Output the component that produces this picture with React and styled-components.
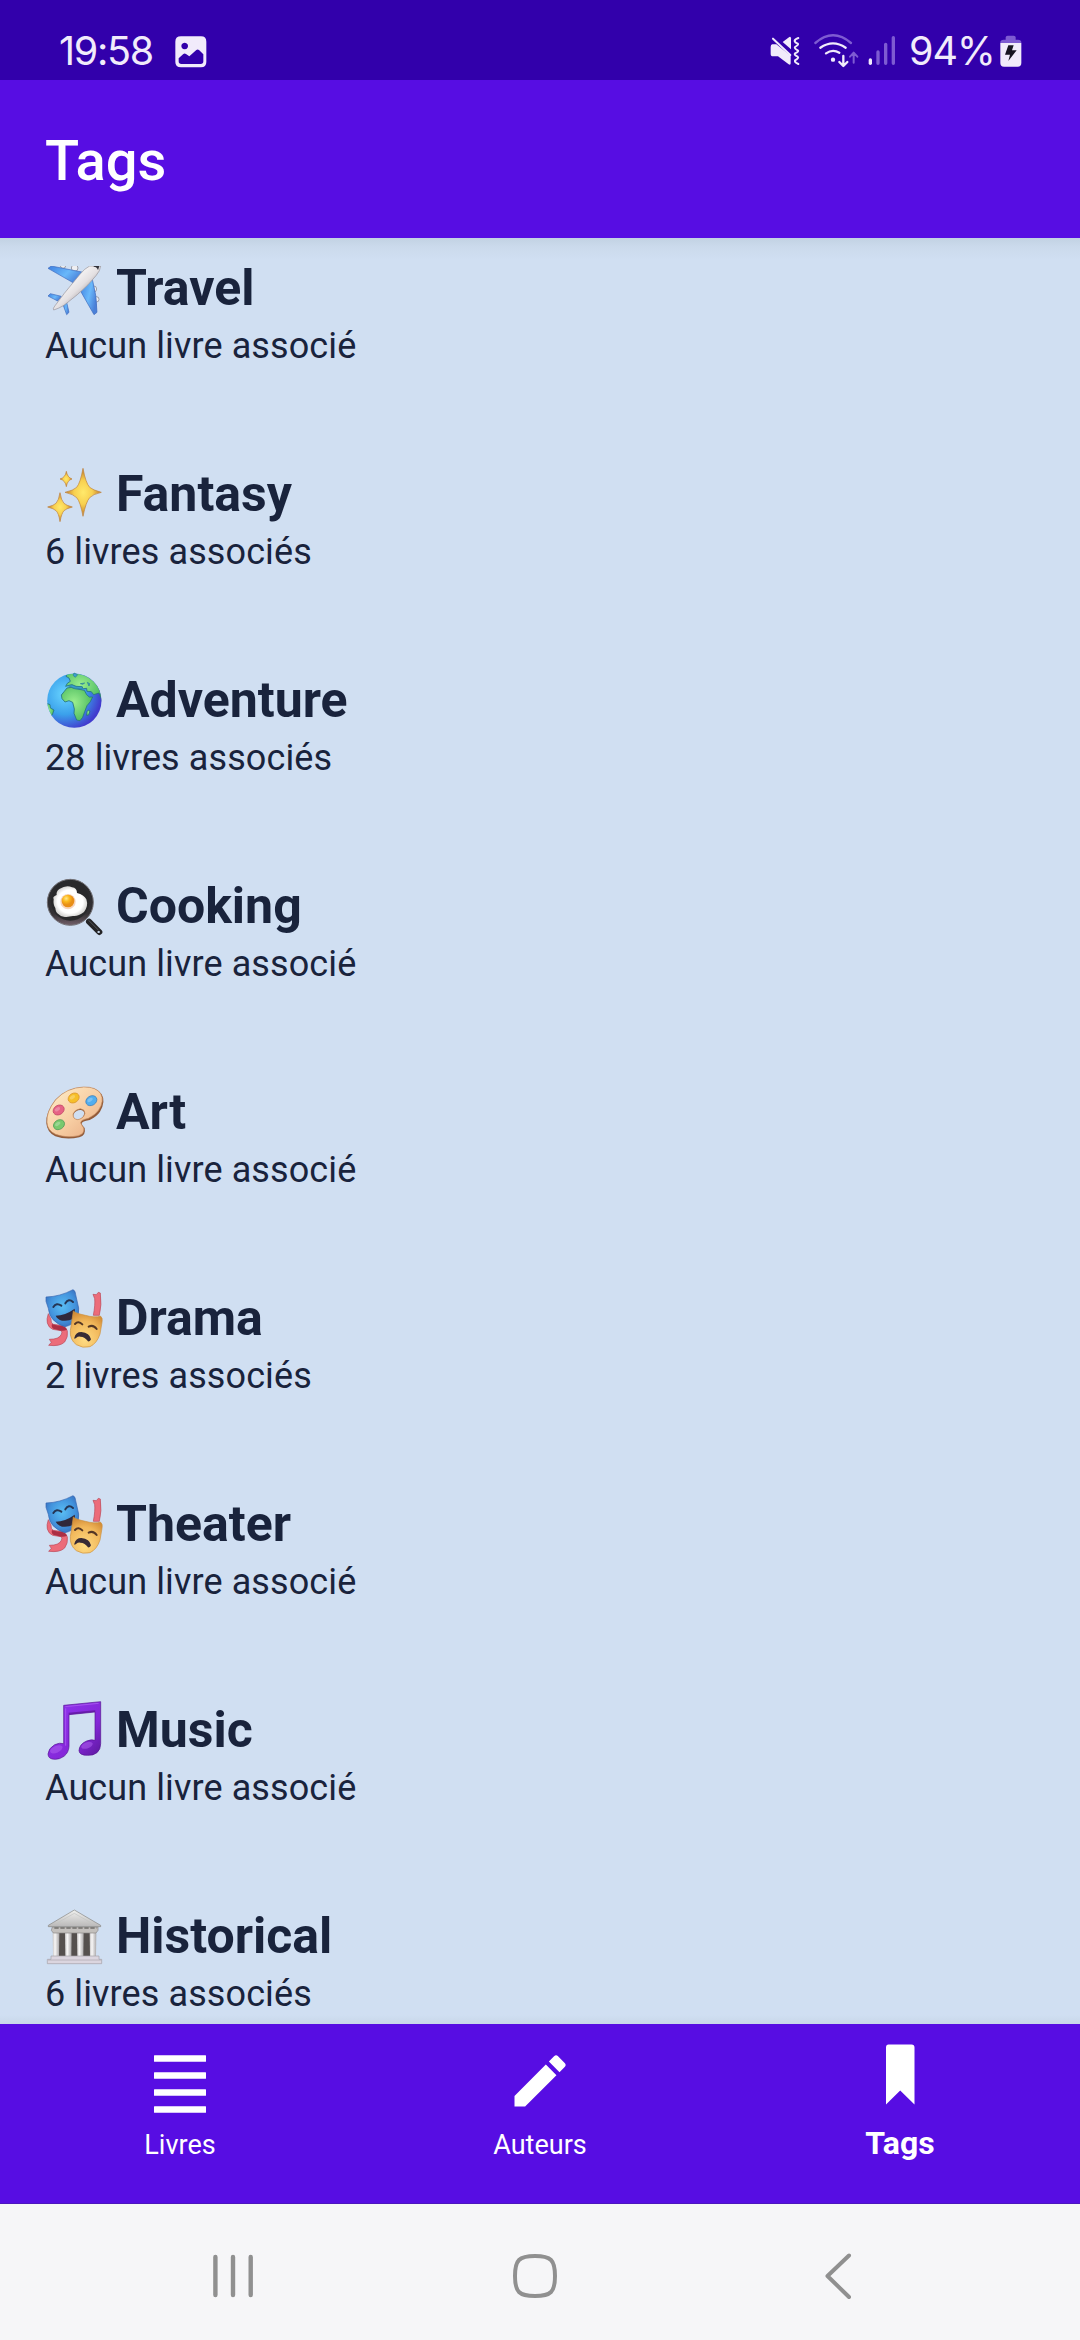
import React from "react";
import styled, { createGlobalStyle } from "styled-components";

const GlobalStyle = createGlobalStyle`
  * { box-sizing: border-box; }
  body { margin: 0; background: #f6f6f8; font-family: Roboto, "Noto Sans", sans-serif; }
  ul { list-style: none; margin: 0; padding: 0; }
  h1, h2, p { margin: 0; }
`;

const Screen = styled.div`
  width: 1080px;
  height: 2340px;
  display: flex;
  flex-direction: column;
  overflow: hidden;
`;

const StatusBar = styled.header`
  height: 80px;
  flex: none;
  display: flex;
  justify-content: space-between;
  padding: 0 58px 0 59px;
  background: #3200ab;
  color: #f1ebfb;
`;

const StatusGroup = styled.div`
  display: flex;
  align-items: flex-start;
  svg { display: block; flex: none; }
`;

const StatusText = styled.span`
  font-family: Inter, Roboto, sans-serif;
  font-size: 39.5px;
  line-height: 48px;
  padding-top: 27px;
  width: ${(p) => p.$width}px;
  padding-left: ${(p) => p.$indent || 0}px;
  letter-spacing: ${(p) => p.$spacing || 0}px;
  white-space: nowrap;
`;

const ImageSlot = styled.div`
  padding-top: 36px;
`;

const AppBar = styled.div`
  height: 158px;
  flex: none;
  display: flex;
  align-items: center;
  padding: 4px 45px 0;
  background: #570de3;
`;

const AppTitle = styled.h1`
  color: #fff;
  font-size: 56px;
  line-height: 66px;
  font-weight: 500;
`;

const Content = styled.main`
  flex: 1;
  min-height: 0;
  overflow: hidden;
  padding: 22px 45px 0;
  background:
    linear-gradient(to bottom, #c2d2e3 0, #cbdaec 9px, rgba(208, 223, 242, 0) 22px),
    linear-gradient(to top, #c8d7e9 0, rgba(208, 223, 242, 0) 9px),
    #d0dff2;
`;

const TagRow = styled.li`
  height: 206px;
`;

const TagHeading = styled.h2`
  display: flex;
  height: 60px;
  gap: 11px;
  color: #19233c;
  font-size: 50px;
  line-height: 56px;
  font-weight: 700;
  svg { display: block; flex: none; overflow: visible; }
`;

const TagCount = styled.p`
  padding-top: 4px;
  color: #19233c;
  font-size: 36px;
  line-height: 44px;
  letter-spacing: 0.1px;
`;

const BottomBar = styled.nav`
  height: 180px;
  flex: none;
  display: grid;
  grid-template-columns: repeat(3, 1fr);
  background: #570de3;
  border-bottom: 1px solid #4c16bd;
`;

const Tab = styled.div`
  display: flex;
  flex-direction: column;
  align-items: center;
  padding-top: 17px;
  color: #fff;
  svg { display: block; flex: none; }
`;

const TabLabel = styled.span`
  display: block;
  line-height: 40px;
  margin-top: ${(p) => (p.$active ? 2 : 4)}px;
  font-size: ${(p) => (p.$active ? 32 : 27)}px;
  font-weight: ${(p) => (p.$active ? 700 : 400)};
`;

const SystemNav = styled.footer`
  height: 136px;
  flex: none;
  display: grid;
  grid-template-columns: 302px 305px 36px;
  align-items: start;
  padding: 46px 0 0 207px;
  background: #f6f6f8;
  svg { display: block; }
`;

function ImageIcon() {
  return (
    <svg width="32" height="32" viewBox="0 0 96 96">
      <path
        fill="currentColor"
        fillRule="evenodd"
        d="M18 1H78Q94 1 94 17V78Q94 94 78 94H18Q1 94 1 78V17Q1 1 18 1ZM29 20a10 10 0 1 0 .1 0ZM11 67V76Q11 84 19 84H77Q85 84 85 76V55L72 42Q68 39 64 42L43 61L33 54Q29 51 25 54Z"
      />
    </svg>
  );
}

function StatusIcons() {
  return (
    <svg width="135" height="80" viewBox="80 0 405 240">
      <g fill="#f1ebfb">
        <path d="M96 133H108L151 167V190Q151 196 145 193L113 169H98Q91 169 91 161V141Q91 133 96 133Z" />
        <path d="M127 126L147 111Q152 109 152 115V148Z" />
      </g>
      <g fill="none" stroke="#f1ebfb" strokeLinecap="round" strokeLinejoin="round">
        <path strokeWidth="6" d="M98 116L150 165" />
        <path strokeWidth="6" d="M174 114Q162 118 163 124Q164 128 172 131Q176 134 164 141Q161 145 172 151Q177 154 164 160Q160 164 172 170Q177 174 164 181Q162 187 174 192" />
        <path strokeWidth="7" d="M240 143Q278 117 316 143M257 160Q277 146 297 158" />
      </g>
      <path d="M225 129Q278 83 332 129" fill="none" stroke="#7e5bd2" strokeWidth="7" strokeLinecap="round" />
      <circle cx="278" cy="179" r="6.5" fill="#f1ebfb" />
      <path d="M309 168V197M297 186L309 198L321 186" fill="none" stroke="#f1ebfb" strokeWidth="7" strokeLinecap="round" strokeLinejoin="round" />
      <path d="M340 188V159M329 170L340 158L351 170" fill="none" stroke="#7e5bd2" strokeWidth="6" strokeLinecap="round" strokeLinejoin="round" />
      <g strokeLinecap="round" strokeWidth="10">
        <path d="M390 180V190" stroke="#f1ebfb" />
        <path d="M413 156V190M436 133V190M459 113V190" stroke="#7e5bd2" />
      </g>
    </svg>
  );
}

function BatteryIcon() {
  return (
    <svg width="22" height="80" viewBox="779 0 66 240">
      <path d="M780 129V127Q780 119 790 119H796V112Q796 107 802 107H820Q826 107 826 112V119H833Q843 119 843 127V129Z" fill="#7e5bd2" />
      <path d="M780 129H843V189Q843 200 832 200H791Q780 200 780 189Z" fill="#f1ebfb" />
      <path d="M804 136H820L815 151H829L804 183L809 164H794Z" fill="#171421" />
    </svg>
  );
}

function Airplane() {
  return (
    <svg width="60" height="60" viewBox="45 28 180 180">
      <defs>
        <linearGradient id="planeBody" x1="0" y1="0" x2="1" y2="1">
          <stop offset=".25" stopColor="#fff" />
          <stop offset=".52" stopColor="#e4e0e2" />
          <stop offset=".72" stopColor="#9f989c" />
        </linearGradient>
        <linearGradient id="planeWing" x1="0" y1="0" x2="1" y2=".5">
          <stop offset="0" stopColor="#3e7fe0" />
          <stop offset=".6" stopColor="#69b8fa" />
          <stop offset="1" stopColor="#4a80d8" />
        </linearGradient>
        <clipPath id="planeClip"><rect x="45" y="48" width="180" height="160" /></clipPath>
      </defs>
      <g clipPath="url(#planeClip)" transform="translate(0 -2)">
        <g fill="#eeeef1" stroke="#777984" strokeWidth="2">
          <circle cx="99" cy="47" r="8" /><circle cx="134" cy="54" r="10" />
          <circle cx="191" cy="117" r="9" /><circle cx="199" cy="148" r="8" />
        </g>
        <g fill="url(#planeWing)" stroke="#3f69bd" strokeWidth="2">
          <path d="M54 55L64 48L160 67L131 99Z" />
          <path d="M187 88Q201 139 201 187L192 194L151 122Z" />
          <path d="M54 138L61 131L94 139L83 153Z" />
          <path d="M98 161L109 153L117 187L110 194Z" />
        </g>
        <path d="M179 48H212Q211 62 198 77Q178 103 142 134L102 166Q85 176 71 180Q67 176 76 166L103 130L148 75Q164 55 179 48Z" fill="url(#planeBody)" stroke="#99949a" strokeWidth="2" />
        <path d="M191 48H208L204 61Q202 51 191 50Z" fill="#303139" />
      </g>
    </svg>
  );
}

function Sparkles() {
  return (
    <svg width="60" height="60" viewBox="45 31 180 180">
      <defs>
        <radialGradient id="sparkle">
          <stop offset="0" stopColor="#ffe96b" />
          <stop offset=".5" stopColor="#f8d04f" />
          <stop offset="1" stopColor="#bd7828" />
        </radialGradient>
      </defs>
      <g fill="url(#sparkle)" stroke="#be813b" strokeWidth="2" strokeLinejoin="round">
        <path d="M159 38Q167 82 179 95Q188 103 214 110Q188 116 179 126Q168 138 159 182Q151 138 140 126Q131 116 105 110Q131 104 140 95Q151 82 159 38Z" />
        <path d="M90 111Q94 135 102 143Q108 149 127 154Q108 159 102 165Q95 172 90 198Q86 172 78 165Q72 159 53 154Q72 149 78 143Q86 135 90 111Z" />
        <path d="M109 47Q112 65 126 70Q112 74 109 93Q106 74 90 70Q106 66 109 47Z" />
      </g>
    </svg>
  );
}

function Globe() {
  return (
    <svg width="60" height="60" viewBox="45 34 180 180">
      <defs>
        <radialGradient id="ocean" cx=".32" cy=".38" r=".68">
          <stop offset="0" stopColor="#69d5ff" />
          <stop offset=".55" stopColor="#3ba1eb" />
          <stop offset="1" stopColor="#413bce" />
        </radialGradient>
        <radialGradient id="land" cx=".4" cy=".45" r=".65">
          <stop offset="0" stopColor="#9bee8e" />
          <stop offset="1" stopColor="#48b85d" />
        </radialGradient>
        <clipPath id="globeClip"><circle cx="133" cy="120" r="81" /></clipPath>
      </defs>
      <circle cx="133" cy="120" r="81.5" fill="url(#ocean)" />
      <g clipPath="url(#globeClip)" fill="url(#land)" stroke="#267282" strokeWidth="2.5" strokeLinejoin="round">
        <path d="M113 35L108 47L117 52L121 62L112 68L107 77L117 74L126 72L138 77L155 78L161 84L170 83L171 92L184 93L191 102L207 97L217 122V75L190 30Z" />
        <path d="M111 82Q124 77 134 84L153 87L163 89L170 102L178 109H188Q182 125 171 135L164 153L158 170L150 180L140 178L132 158L133 145L128 125L117 120L105 124L96 114L94 103L103 92Z" />
        <path d="M50 128L60 132L61 142L72 148L67 162L58 170L45 145Z" />
        <path d="M175 148L180 151L176 163L170 164L171 153Z" />
      </g>
      <g fill="#3c9fd1" stroke="#277d91" strokeWidth="2">
        <path d="M113 75L126 73L139 78L157 78V85L132 82Z" />
        <path d="M151 69L164 67L158 71ZM172 65L179 69L177 76ZM129 44L136 50L143 42L132 37Z" />
      </g>
    </svg>
  );
}

function FryingPan() {
  return (
    <svg width="60" height="60" viewBox="45 37 180 180">
      <defs>
        <linearGradient id="pan" x1="0" y1="0" x2="0" y2="1">
          <stop offset="0" stopColor="#28292b" />
          <stop offset=".75" stopColor="#343134" />
          <stop offset="1" stopColor="#73606a" />
        </linearGradient>
        <radialGradient id="white"><stop offset=".75" stopColor="#fff" /><stop offset="1" stopColor="#d8d7d5" /></radialGradient>
        <radialGradient id="yolk" cx=".36" cy=".3"><stop offset="0" stopColor="#ffe88a" /><stop offset=".5" stopColor="#fbb91e" /><stop offset="1" stopColor="#e88e17" /></radialGradient>
      </defs>
      <path d="M177 168L208 199" stroke="#242426" strokeWidth="18" strokeLinecap="round" />
      <path d="M176 164L205 193" stroke="#55575b" strokeWidth="3" strokeLinecap="round" />
      <ellipse cx="206" cy="199" rx="4" ry="3" fill="#d0dff2" />
      <circle cx="121" cy="110" r="69" fill="url(#pan)" stroke="#737176" strokeWidth="3" />
      <circle cx="121" cy="107" r="58" fill="#29292b" />
      <path d="M71 100Q66 94 80 88Q78 78 88 70Q110 56 126 65Q141 67 141 82Q162 87 169 101Q176 121 162 139Q144 153 129 151L114 153Q95 157 86 146Q77 141 76 127Q69 118 71 100Z" fill="url(#white)" />
      <circle cx="114" cy="108" r="23" fill="#f7d4bd" />
      <circle cx="114" cy="106" r="19" fill="url(#yolk)" />
    </svg>
  );
}

function Palette() {
  const paints = [
    [131, 82, "#f6bf29", "#d89126"],
    [184, 90, "#52aeee", "#327bbd"],
    [86, 118, "#e66285", "#bd3e60"],
    [87, 162, "#78c96e", "#479554"],
  ];
  return (
    <svg width="60" height="60" viewBox="45 40 180 180">
      <defs>
        <linearGradient id="wood" x1="0" y1="0" x2="1" y2="1">
          <stop offset="0" stopColor="#fff0cc" />
          <stop offset=".55" stopColor="#f7cda2" />
          <stop offset="1" stopColor="#e6a77f" />
        </linearGradient>
      </defs>
      <path
        transform="translate(0 2)"
        d="M161 47Q201 47 215 69Q228 91 210 121Q201 135 179 146Q155 150 155 157Q157 162 164 170Q169 192 148 198Q109 207 76 195Q51 183 49 156Q46 124 76 85Q109 49 161 47ZM151 116Q137 116 130 130Q129 144 144 145Q160 142 163 126Q162 117 151 116Z"
        fill="#925b39" fillRule="evenodd"
      />
      <path
        d="M161 49Q198 48 212 69Q224 91 206 118Q197 132 175 143Q151 148 152 157Q155 163 161 172Q165 188 146 195Q109 203 77 191Q52 180 51 155Q48 124 77 87Q110 51 161 49ZM151 114Q135 116 129 130Q128 145 143 147Q161 144 165 128Q164 115 151 114Z"
        fill="url(#wood)" stroke="#c68c60" strokeWidth="2" fillRule="evenodd"
      />
      {paints.map(([x, y, color, edge]) => (
        <g key={color} transform={`rotate(-32 ${x} ${y})`}>
          <ellipse cx={x} cy={y} rx="17.5" ry="14" fill={color} stroke={edge} strokeWidth="2" />
          <ellipse cx={x - 2} cy={y - 4} rx="9" ry="5" fill="#fff" opacity=".25" />
        </g>
      ))}
    </svg>
  );
}

function Masks({ id }) {
  return (
    <svg width="60" height="60" viewBox="45 43 180 180">
      <defs>
        <radialGradient id={`${id}-happy`} cx=".5" cy=".45" r=".65"><stop offset="0" stopColor="#59bdf4" /><stop offset=".6" stopColor="#4292dc" /><stop offset="1" stopColor="#3665b5" /></radialGradient>
        <radialGradient id={`${id}-sad`} cx=".45" cy=".8" r=".8"><stop offset="0" stopColor="#ffdb82" /><stop offset=".65" stopColor="#f1b75a" /><stop offset="1" stopColor="#d28b36" /></radialGradient>
      </defs>
      <g fill="#ec6c7a" stroke="#b84859" strokeWidth="2" strokeLinejoin="round">
        <path d="M189 56L199 57L205 50L211 52Q216 88 208 119H190Q196 87 194 69Z" />
        <path d="M55 114Q49 131 52 142Q56 156 68 161L93 165Q98 168 94 176Q88 191 58 191L64 200L56 209Q90 213 104 199Q115 184 112 166Q107 151 91 149L70 146Q62 142 63 130Z" />
      </g>
      <path d="M66 145Q72 149 94 150Q106 152 111 162Q104 166 93 165L70 159Q63 154 66 145Z" fill="#ab2e45" />
      <path d="M48 64Q90 63 129 42Q136 44 137 57L146 97Q148 117 138 131Q129 148 105 153Q86 149 69 132Q57 119 55 98L48 77Z" fill={`url(#${id}-happy)`} stroke="#3565b1" strokeWidth="2" />
      <path d="M70 94Q79 80 94 90M106 83Q116 67 129 79" fill="none" stroke="#253656" strokeWidth="6" strokeLinecap="round" />
      <path d="M77 120Q105 120 134 99Q137 115 128 130Q117 137 96 135Q82 131 77 120Z" fill="#30283b" />
      <path d="M130 106Q137 113 166 119Q194 127 211 121Q219 126 216 140L210 175Q201 203 180 213Q158 219 139 207Q119 192 121 165Z" fill={`url(#${id}-sad)`} stroke="#cb913f" strokeWidth="2" />
      <path d="M135 145Q145 134 157 146M176 153Q190 146 200 160" fill="none" stroke="#543725" strokeWidth="6" strokeLinecap="round" />
      <path d="M133 186Q137 169 154 169Q179 171 183 191Q180 199 174 197Q165 183 151 183Q144 182 138 187Q132 192 133 186Z" fill="#372a35" />
    </svg>
  );
}

function MusicNotes() {
  return (
    <svg width="60" height="60" viewBox="45 35 180 180">
      <defs>
        <linearGradient id="noteFill" x1="0" y1="0" x2="1" y2="1">
          <stop offset="0" stopColor="#9135f2" />
          <stop offset=".65" stopColor="#8427d7" />
          <stop offset="1" stopColor="#571797" />
        </linearGradient>
      </defs>
      <path d="M101 45L212 34V160Q212 177 201 187Q190 196 173 195Q148 195 147 181Q148 161 170 152Q185 146 195 150V65L117 73V168Q116 187 102 198Q89 207 76 207Q54 207 54 191Q55 174 74 163Q90 156 101 160Z" fill="url(#noteFill)" stroke="#551291" strokeWidth="2" />
      <path d="M106 49L206 39M107 54V166" stroke="#a653ef" strokeWidth="3" />
      <path d="M116 70L196 62" stroke="#54128a" strokeWidth="5" opacity=".6" />
      <ellipse cx="79" cy="177" rx="20" ry="10" transform="rotate(-24 79 177)" fill="#b263f0" opacity=".5" />
      <ellipse cx="171" cy="165" rx="18" ry="9" transform="rotate(-20 171 165)" fill="#b263f0" opacity=".5" />
    </svg>
  );
}

function Temple() {
  return (
    <svg width="60" height="60" viewBox="45 53 180 180">
      <defs>
        <linearGradient id="roof" x1="0" y1="0" x2="0" y2="1"><stop offset="0" stopColor="#f1f1ef" /><stop offset="1" stopColor="#b9b8b8" /></linearGradient>
        <linearGradient id="column" x1="0" y1="0" x2="1" y2="0"><stop offset="0" stopColor="#c6c4c4" /><stop offset=".35" stopColor="#f9f8f8" /><stop offset="1" stopColor="#aaa8a9" /></linearGradient>
      </defs>
      <path d="M70 127H198V202H70Z" fill="#55504e" />
      {[70, 107, 143, 181].map((x) => (
        <path key={x} d={`M${x - 2} 127H${x + 18}L${x + 17} 199H${x - 1}Z`} fill="url(#column)" />
      ))}
      <path d="M67 110H204V120L198 128H70L64 120Z" fill="#c3c0bd" stroke="#898785" strokeWidth="2" />
      <path d="M73 113H200" stroke="#706d6b" strokeWidth="5" strokeDasharray="13 5" />
      <path d="M55 105L133 59L212 105V109H55Z" fill="url(#roof)" stroke="#858582" strokeWidth="2" />
      <path d="M82 98L133 69L184 98" fill="none" stroke="#c3c4c2" strokeWidth="2" />
      <path d="M63 197H207V207H215V220H52V207H63Z" fill="#dbd5df" stroke="#a5a0a8" strokeWidth="2" />
      <path d="M54 209H214" stroke="#aaa3ae" strokeWidth="2" />
    </svg>
  );
}

function ListIcon() {
  return (
    <svg width="68" height="80" viewBox="0 0 68 80" fill="#fff">
      {[14.2, 31.2, 48.2, 65.2].map((y) => (
        <rect key={y} x="8" y={y} width="52" height="6.6" rx=".5" />
      ))}
    </svg>
  );
}

function PencilIcon() {
  return (
    <svg width="68" height="80" viewBox="0 -2.1 24 28.2" fill="#fff">
      <path d="M3 17.25V21h3.75L17.81 9.94l-3.75-3.75L3 17.25zM20.71 7.04a1 1 0 0 0 0-1.41l-2.34-2.34a1 1 0 0 0-1.41 0l-1.83 1.83 3.75 3.75 1.83-1.83z" />
    </svg>
  );
}

function BookmarkIcon() {
  return (
    <svg width="68" height="80" viewBox="0 0 68 80" fill="#fff">
      <path d="M22.5 3.5H45.5Q48.5 3.5 48.5 6.5V63.5L34.2 49.5L20 63.5V6.5Q20 3.5 22.5 3.5Z" />
    </svg>
  );
}

const tags = [
  { name: "Travel", icon: <Airplane />, count: 0 },
  { name: "Fantasy", icon: <Sparkles />, count: 6 },
  { name: "Adventure", icon: <Globe />, count: 28 },
  { name: "Cooking", icon: <FryingPan />, count: 0 },
  { name: "Art", icon: <Palette />, count: 0 },
  { name: "Drama", icon: <Masks id="drama" />, count: 2 },
  { name: "Theater", icon: <Masks id="theater" />, count: 0 },
  { name: "Music", icon: <MusicNotes />, count: 0 },
  { name: "Historical", icon: <Temple />, count: 6 },
];

const tabs = [
  { label: "Livres", icon: <ListIcon /> },
  { label: "Auteurs", icon: <PencilIcon /> },
  { label: "Tags", icon: <BookmarkIcon />, active: true },
];

const countLabel = (n) => (n === 0 ? "Aucun livre associé" : `${n} livres associés`);

export default function App() {
  return (
    <Screen>
      <GlobalStyle />
      <StatusBar>
        <StatusGroup>
          <StatusText $width={116} $spacing={-1.3}>19:58</StatusText>
          <ImageSlot><ImageIcon /></ImageSlot>
        </StatusGroup>
        <StatusGroup>
          <StatusIcons />
          <StatusText $width={98} $indent={7} $spacing={-1}>94%</StatusText>
          <BatteryIcon />
        </StatusGroup>
      </StatusBar>
      <AppBar><AppTitle>Tags</AppTitle></AppBar>
      <Content>
        <ul>
          {tags.map((tag) => (
            <TagRow key={tag.name}>
              <TagHeading>{tag.icon}<span>{tag.name}</span></TagHeading>
              <TagCount>{countLabel(tag.count)}</TagCount>
            </TagRow>
          ))}
        </ul>
      </Content>
      <BottomBar>
        {tabs.map((tab) => (
          <Tab key={tab.label}>
            {tab.icon}
            <TabLabel $active={tab.active}>{tab.label}</TabLabel>
          </Tab>
        ))}
      </BottomBar>
      <SystemNav>
        <svg width="52" height="52" viewBox="0 0 52 52" stroke="#909090" strokeWidth="4.4" strokeLinecap="round">
          <path d="M8.4 7V45M26 7V45M43.7 7V45" />
        </svg>
        <svg width="52" height="52" viewBox="0 0 52 52" fill="none" stroke="#909090" strokeWidth="4">
          <path d="M26 6Q38 6 42 10Q46 14 46 26Q46 38 42 42Q38 46 26 46Q14 46 10 42Q6 38 6 26Q6 14 10 10Q14 6 26 6Z" />
        </svg>
        <svg width="52" height="52" viewBox="0 0 52 52" fill="none" stroke="#909090" strokeWidth="4" strokeLinecap="round" strokeLinejoin="round">
          <path d="M35 5.5L13.5 26L35 47" />
        </svg>
      </SystemNav>
    </Screen>
  );
}
